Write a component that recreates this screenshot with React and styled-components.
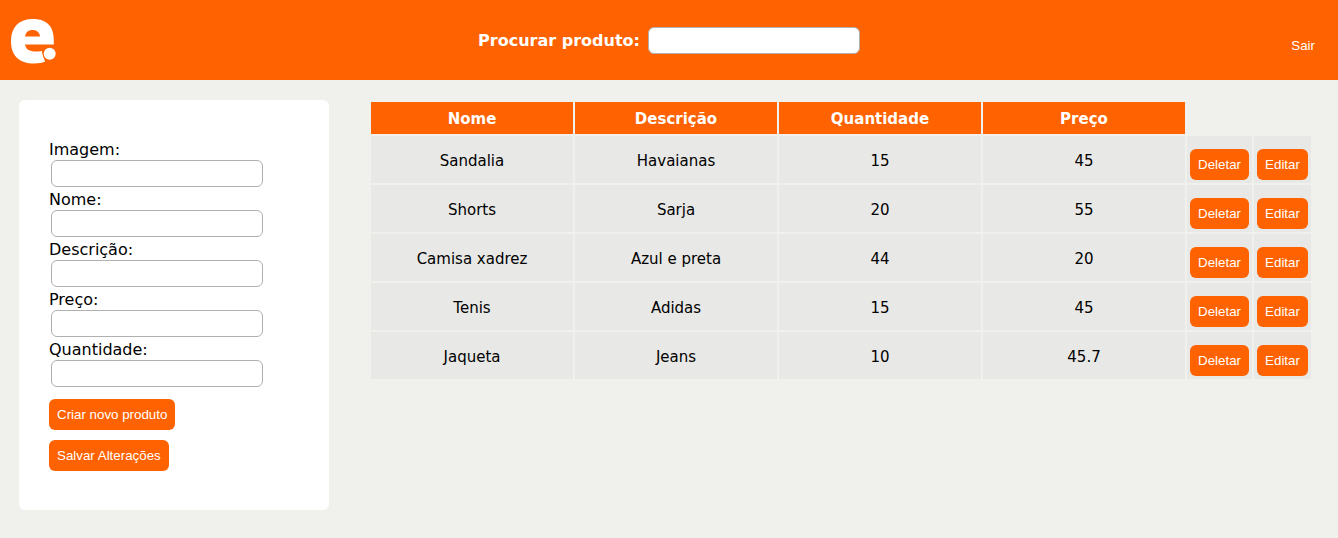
import React, { useState } from "react";
import styled, { createGlobalStyle } from "styled-components";

const ORANGE = "#ff6200";

const GlobalStyle = createGlobalStyle`
  * { box-sizing: border-box; }
  body {
    margin: 0;
    background: #f0f1ec;
    color: #000;
    font-family: Verdana, "DejaVu Sans", sans-serif;
    font-size: 16px;
  }
`;

const Header = styled.header`
  display: grid;
  grid-template-columns: 1fr auto 1fr;
  align-items: center;
  height: 80px;
  padding: 0 10px;
  background: ${ORANGE};
`;

const Logo = styled.svg`
  display: block;
  width: 48px;
  height: 48px;
`;

const Search = styled.form`
  display: flex;
  align-items: center;
  gap: 8px;
  color: #fff;
  font-weight: bold;
`;

const TextInput = styled.input`
  width: 212px;
  height: 27px;
  padding: 4px 8px;
  border: 1px solid #b0b0b0;
  border-radius: 6px;
  background: #fff;
  font-family: "Liberation Sans", Arial, sans-serif;
`;

const Button = styled.button`
  height: 31px;
  padding: 0 8px;
  border: 0;
  border-radius: 6px;
  background: ${ORANGE};
  color: #fff;
  font-family: "Liberation Sans", Arial, sans-serif;
  white-space: nowrap;
  cursor: pointer;
`;

const LogoutButton = styled(Button)`
  justify-self: end;
  margin: 10px 5px 0 0;
`;

const Main = styled.main`
  display: flex;
  align-items: flex-start;
  gap: 40px;
  padding: 20px 25px 28px 19px;
`;

const ProductForm = styled.form`
  display: flex;
  flex-direction: column;
  flex: 0 0 310px;
  gap: 3px;
  padding: 40px 30px 39px;
  border-radius: 6px;
  background: #fff;
`;

const Field = styled.div`
  display: flex;
  flex-direction: column;
  line-height: 20px;

  ${TextInput} { margin-left: 2px; }
`;

const FormActions = styled.div`
  display: flex;
  flex-direction: column;
  align-items: flex-start;
  gap: 10px;
  margin-top: 9px;
`;

const Table = styled.table`
  flex: 1;
  width: 100%;
  min-width: 0;
  table-layout: fixed;
  border-spacing: 2px;
  font-size: 15px;
  text-align: center;
`;

const ActionCol = styled.col`
  width: ${({ $wide }) => ($wide ? "65px" : "57px")};
`;

const HeadCell = styled.th`
  height: 32px;
  padding: 2px 0 0;
  background: ${ORANGE};
  color: #fff;
`;

const Cell = styled.td`
  height: 47px;
  padding: 2px 0 0;
  background: #e8e8e6;
`;

const ActionCell = styled(Cell)`
  padding: 13px 3px 3px;
  font-size: 0;
`;

const fields = [
  ["imagem", "Imagem:"],
  ["nome", "Nome:"],
  ["descricao", "Descrição:"],
  ["preco", "Preço:"],
  ["quantidade", "Quantidade:"],
];

const products = [
  ["Sandalia", "Havaianas", "15", "45"],
  ["Shorts", "Sarja", "20", "55"],
  ["Camisa xadrez", "Azul e preta", "44", "20"],
  ["Tenis", "Adidas", "15", "45"],
  ["Jaqueta", "Jeans", "10", "45.7"],
];

export default function App() {
  const [query, setQuery] = useState("");
  const visible = products.filter(([name]) =>
    name.toLowerCase().includes(query.toLowerCase())
  );

  return (
    <>
      <GlobalStyle />
      <Header>
        <Logo viewBox="0 0 48 48" role="img" aria-label="Logo">
          <path
            fill="#fff"
            fillRule="evenodd"
            d="M23 3C9 3 1 11 1 25C1 39.500 9 47.500 24.500 47.500C28.500 47.500 32 47 35 45.800L31.700 35C29.500 35.500 28 35.500 26 35.500C19.500 35.500 16 33.500 15 28.500H43.800C45 11 37.500 3 23 3ZM15 20.500C16 16 18.500 14 22.500 14C27 14 29.500 16.500 30 20.500Z"
          />
          <circle cx="39.700" cy="37.700" r="7.100" fill={ORANGE} />
          <circle cx="39.700" cy="37.700" r="6" fill="#fff" />
        </Logo>
        <Search onSubmit={(e) => e.preventDefault()}>
          <label htmlFor="busca">Procurar produto:</label>
          <TextInput id="busca" value={query} onChange={(e) => setQuery(e.target.value)} />
        </Search>
        <LogoutButton type="button">Sair</LogoutButton>
      </Header>
      <Main>
        <ProductForm onSubmit={(e) => e.preventDefault()}>
          {fields.map(([id, label]) => (
            <Field key={id}>
              <label htmlFor={id}>{label}</label>
              <TextInput id={id} name={id} />
            </Field>
          ))}
          <FormActions>
            <Button type="submit">Criar novo produto</Button>
            <Button type="button">Salvar Alterações</Button>
          </FormActions>
        </ProductForm>
        <Table>
          <colgroup>
            <col span={4} />
            <ActionCol $wide />
            <ActionCol />
          </colgroup>
          <thead>
            <tr>
              <HeadCell scope="col">Nome</HeadCell>
              <HeadCell scope="col">Descrição</HeadCell>
              <HeadCell scope="col">Quantidade</HeadCell>
              <HeadCell scope="col">Preço</HeadCell>
            </tr>
          </thead>
          <tbody>
            {visible.map((product) => (
              <tr key={product[0]}>
                {product.map((value, i) => (
                  <Cell key={i}>{value}</Cell>
                ))}
                <ActionCell>
                  <Button type="button">Deletar</Button>
                </ActionCell>
                <ActionCell>
                  <Button type="button">Editar</Button>
                </ActionCell>
              </tr>
            ))}
          </tbody>
        </Table>
      </Main>
    </>
  );
}
